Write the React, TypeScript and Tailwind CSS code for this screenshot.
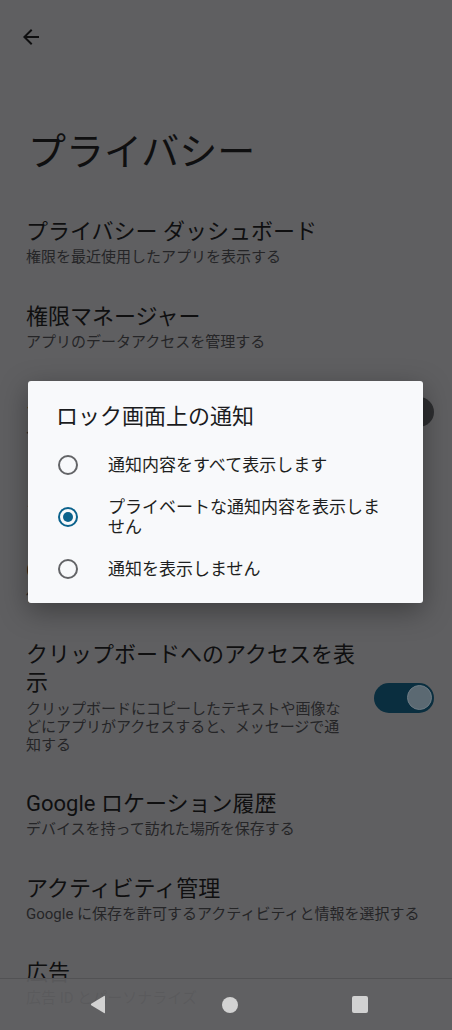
import React from "react";

function Row({
  title,
  sub,
  toggle,
}: {
  title: string;
  sub: string;
  toggle?: "on" | "off";
}) {
  return (
    <div className="flex items-center py-[18px] pl-[26px]">
      <div className={toggle ? "w-[330px] flex-none" : "min-w-0 flex-1 pr-[12px]"}>
        <div className="text-[22px] leading-[28px] text-[#0f0f10]">{title}</div>
        <div
          className={
            toggle
              ? "mt-[3px] w-[325px] text-[15px] leading-[18px] text-[#252527]"
              : "mt-[3px] text-[15px] leading-[17.5px] text-[#252527]"
          }
        >
          {sub}
        </div>
      </div>
      {toggle === "on" && (
        <div className="ml-auto mr-[18px] flex h-[30px] w-[60px] items-center justify-end rounded-full bg-[#0a2e3f] px-[2px]">
          <div className="h-[25px] w-[25px] rounded-full border border-[#6e7b84] bg-[#5b6972]" />
        </div>
      )}
      {toggle === "off" && (
        <div className="ml-auto mr-[18px] flex h-[30px] w-[60px] items-center justify-start rounded-full bg-[#2d2e30] px-[2px]">
          <div className="h-[25px] w-[25px] rounded-full bg-[#5a5a5c]" />
        </div>
      )}
    </div>
  );
}

function Radio({ checked }: { checked?: boolean }) {
  return checked ? (
    <div className="flex h-[20px] w-[20px] flex-none items-center justify-center rounded-full border-2 border-[#0b628c]">
      <div className="h-[10px] w-[10px] rounded-full bg-[#0b628c]" />
    </div>
  ) : (
    <div className="h-[20px] w-[20px] flex-none rounded-full border-2 border-[#636467]" />
  );
}

function Option({ label, checked }: { label: string; checked?: boolean }) {
  return (
    <div className="flex min-h-[50px] items-center py-[7px] pl-[30px] pr-[28px]">
      <Radio checked={checked} />
      <div className="ml-[30px] text-[17px] leading-[20px] text-[#1e1f21]">{label}</div>
    </div>
  );
}

export default function App() {
  return (
    <div className="relative h-[1030px] w-[452px] overflow-hidden bg-[#5f5f61] font-['Roboto','Noto_Sans_CJK_JP',sans-serif]">
      <div className="pl-[19px] pt-[25px]">
        <svg width="24" height="24" viewBox="0 0 24 24">
          <path
            fill="#0f0f10"
            d="M20 11H7.83l5.59-5.59L12 4l-8 8 8 8 1.41-1.41L7.83 13H20v-2z"
          />
        </svg>
      </div>
      <div className="mt-[81px] pl-[28px] text-[38px] leading-[44px] text-[#0f0f10]">
        プライバシー
      </div>
      <div className="mt-[26px]">
        <Row title="プライバシー ダッシュボード" sub="権限を最近使用したアプリを表示する" />
        <Row title="権限マネージャー" sub="アプリのデータアクセスを管理する" />
        <Row title="パスワードの表示" sub="入力時に文字を一時的に表示する" toggle="off" />
        <Row title="ロック画面上の通知" sub="プライベートな通知内容を表示しません" />
        <Row title="Google の自動入力サービス" sub="保存したパスワード、クレジットカード、住所" />
        <Row
          title="クリップボードへのアクセスを表示"
          sub="クリップボードにコピーしたテキストや画像などにアプリがアクセスすると、メッセージで通知する"
          toggle="on"
        />
        <Row title="Google ロケーション履歴" sub="デバイスを持って訪れた場所を保存する" />
        <Row title="アクティビティ管理" sub="Google に保存を許可するアクティビティと情報を選択する" />
        <Row title="広告" sub="広告 ID とパーソナライズ" />
      </div>

      {/* Dialog */}
      <div className="absolute left-[28px] top-[381px] h-[222px] w-[395px] rounded-[3px] bg-[#f8f9fb] shadow-[0_8px_28px_rgba(0,0,0,0.35)]">
        <div className="px-[28px] pt-[22px] text-[22px] leading-[28px] text-[#1b1c1e]">
          ロック画面上の通知
        </div>
        <div className="mt-[9px]">
          <Option label="通知内容をすべて表示します" />
          <Option label="プライベートな通知内容を表示しません" checked />
          <Option label="通知を表示しません" />
        </div>
      </div>

      {/* Nav bar */}
      <div className="absolute bottom-0 left-0 flex h-[52px] w-full items-center border-t border-[#525254] bg-[#616163]/90 pl-[90px]">
        <svg width="16" height="19" viewBox="0 0 16 19">
          <path d="M15 1.5 L15 17.5 Q15 18.6 14 18 L1.2 10.3 Q0.4 9.5 1.2 8.7 L14 1 Q15 0.4 15 1.5 Z" fill="#d2d2d2" />
        </svg>
        <div className="ml-[116px] h-[16px] w-[16px] rounded-full bg-[#d2d2d2]" />
        <div className="ml-[114px] h-[17px] w-[16px] rounded-[2px] bg-[#d2d2d2]" />
      </div>
    </div>
  );
}
